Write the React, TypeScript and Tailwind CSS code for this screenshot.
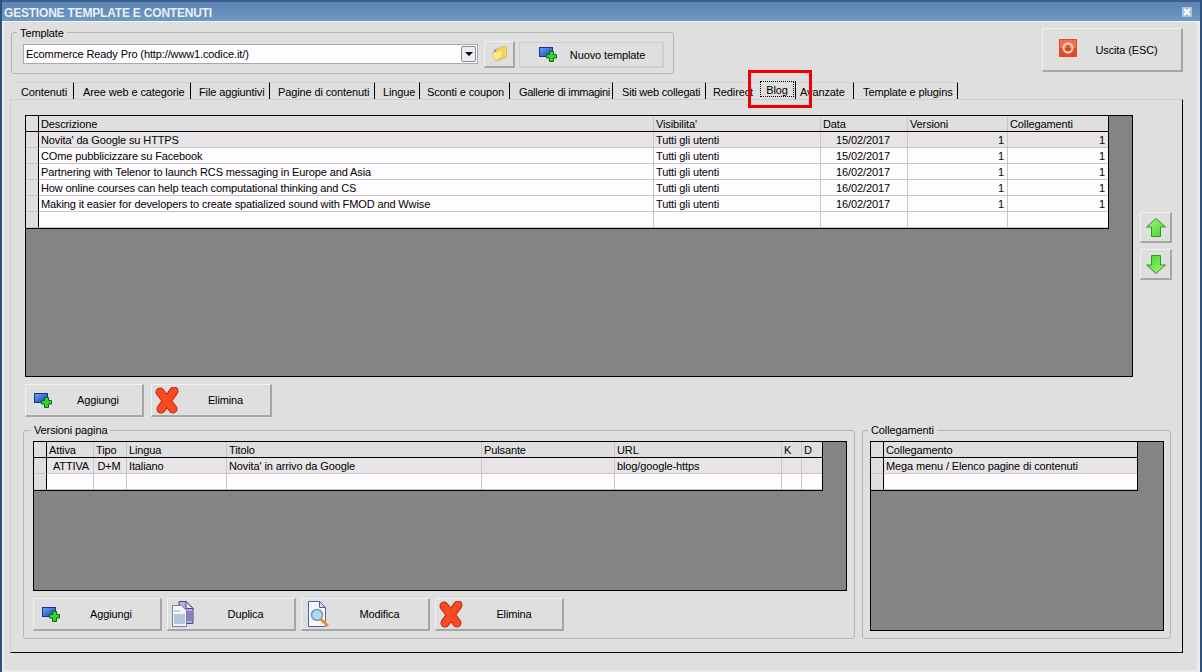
import type { ReactNode } from "react";

type Col = { label: string; w: string; cell?: string };

const tabs = [
  { label: "Contenuti", cls: "w-[60px] pl-[7px]" },
  { label: "Aree web e categorie", cls: "w-[117px] pl-[9px]" },
  { label: "File aggiuntivi", cls: "w-[79px] pl-[8px]" },
  { label: "Pagine di contenuti", cls: "w-[105px] pl-[8px]" },
  { label: "Lingue", cls: "w-[45px] pl-[8px]" },
  { label: "Sconti e coupon", cls: "w-[90px] pl-[7px]" },
  { label: "Gallerie di immagini", cls: "w-[103px] pl-[9px] tracking-[-0.28px]" },
  { label: "Siti web collegati", cls: "w-[93px] pl-[9px] tracking-[-0.2px]" },
  { label: "Redirect", cls: "w-[53px] pl-[7px] border-r-transparent" },
  { label: "Blog", cls: "active" },
  { label: "Avanzate", cls: "w-[58px] pl-[4px]" },
  { label: "Template e plugins", cls: "w-[104px] pl-[9px]" },
];

const blogCols: Col[] = [
  { label: "Descrizione", w: "w-[615px]" },
  { label: "Visibilita'", w: "w-[167px]" },
  { label: "Data", w: "w-[87px]", cell: "text-center pr-[4px]" },
  { label: "Versioni", w: "w-[100px]", cell: "text-right pr-[3px]" },
  { label: "Collegamenti", w: "w-[100px]", cell: "text-right pr-[3px]" },
];

const blogRows = [
  ["Novita' da Google su HTTPS", "Tutti gli utenti", "15/02/2017", "1", "1"],
  ["COme pubblicizzare su Facebook", "Tutti gli utenti", "15/02/2017", "1", "1"],
  ["Partnering with Telenor to launch RCS messaging in Europe and Asia", "Tutti gli utenti", "16/02/2017", "1", "1"],
  ["How online courses can help teach computational thinking and CS", "Tutti gli utenti", "16/02/2017", "1", "1"],
  ["Making it easier for developers to create spatialized sound with FMOD and Wwise", "Tutti gli utenti", "16/02/2017", "1", "1"],
  ["", "", "", "", ""],
];

const versionCols: Col[] = [
  { label: "Attiva", w: "w-[47px]", cell: "text-center" },
  { label: "Tipo", w: "w-[33px]", cell: "text-center pr-[4px]" },
  { label: "Lingua", w: "w-[100px]" },
  { label: "Titolo", w: "w-[255px]" },
  { label: "Pulsante", w: "w-[133px]" },
  { label: "URL", w: "w-[167px]" },
  { label: "K", w: "w-[20px]" },
  { label: "D", w: "w-[20px]" },
];

const versionRows = [
  ["ATTIVA", "D+M", "Italiano", "Novita' in arrivo da Google", "", "blog/google-https", "", ""],
  ["", "", "", "", "", "", "", ""],
];

const linkCols: Col[] = [{ label: "Collegamento", w: "w-[253px]" }];
const linkRows = [["Mega menu / Elenco pagine di contenuti"], [""]];

function DataGrid({ size, cols, rows }: { size: string; cols: Col[]; rows: string[][] }) {
  return (
    <div className={`${size} border border-black bg-[#858385] overflow-hidden`}>
      <div className="w-fit border-r border-b border-black">
        <div className="flex h-[16px] border-b border-black bg-[#dfdfdf]">
          <div className="w-[13px] border-r border-black" />
          {cols.map((c, i) => (
            <div key={c.label} className={`${c.w} pl-[2px] leading-[17px] ${i < cols.length - 1 ? "border-r border-[#c6c6c6]" : ""}`}>
              {c.label}
            </div>
          ))}
        </div>
        {rows.map((row, r) => (
          <div key={r} className={`flex h-[16px] ${r === 0 ? "bg-[#e8e4e8]" : "bg-[#fffcff]"}`}>
            <div className="w-[13px] bg-[#dfdfdf] border-r border-r-black border-b border-b-[#c6c6c6]" />
            {row.map((v, i) => (
              <div
                key={i}
                className={`${cols[i].w} pl-[2px] leading-[17px] h-[16px] whitespace-nowrap border-b border-[#c6c6c6] ${i < cols.length - 1 ? "border-r" : ""} ${cols[i].cell ?? ""}`}
              >
                {v}
              </div>
            ))}
          </div>
        ))}
      </div>
    </div>
  );
}

function Btn({ size, region, icon, label }: { size: string; region: string; icon: ReactNode; label?: string }) {
  return (
    <button className={`${size} flex items-center shrink-0 bg-[#dfdfdf] border-t border-l border-t-[#f0f0f0] border-l-[#f0f0f0] border-r-2 border-b-2 border-r-[#a6a6a6] border-b-[#a6a6a6]`}>
      <span className={`${region} flex items-center shrink-0`}>{icon}</span>
      {label && <span className="flex-1 text-center whitespace-nowrap pt-[1px]">{label}</span>}
    </button>
  );
}

function Group({ size, title, legend, pad, children }: { size: string; title: string; legend: string; pad: string; children: ReactNode }) {
  return (
    <fieldset className={`${size} border border-[#b5b5b5] rounded-[3px] min-w-0 shrink-0`}>
      <legend className={`${legend} px-[3px] leading-[14px]`}>{title}</legend>
      <div className={pad}>{children}</div>
    </fieldset>
  );
}

function AddIcon() {
  return (
    <svg width="18" height="15" viewBox="0 0 18 15" className="shrink-0 overflow-visible">
      <defs>
        <linearGradient id="addBlue" x1="0" y1="0" x2="1" y2="1">
          <stop offset="0" stopColor="#6fa4f0" />
          <stop offset="1" stopColor="#0f3fc0" />
        </linearGradient>
      </defs>
      <rect x="0.5" y="0.5" width="13" height="9" fill="url(#addBlue)" stroke="#12378f" />
      <path d="M10.500 4.500h4v3h3v3.500h-3v3.500h-4V11h-3V7.500h3z" fill="#3ccf30" stroke="#0b6a12" />
    </svg>
  );
}

function DeleteIcon() {
  return (
    <svg width="24" height="27" viewBox="0 0 24 27" className="shrink-0">
      <path d="M5 5 L18 22 M19 4 L6 22" stroke="#b92c10" strokeWidth="9" strokeLinecap="round" fill="none" />
      <path d="M5 5 L18 22 M19 4 L6 22" stroke="#fb4a22" strokeWidth="7" strokeLinecap="round" fill="none" />
    </svg>
  );
}

function DuplicateIcon() {
  return (
    <svg width="22" height="26" viewBox="0 0 22 26" className="shrink-0">
      <path d="M7 .5h7l7 7v15H7z" fill="#b9addb" stroke="#4f4088" />
      <path d="M14 .5v7h7z" fill="#e8e4f5" stroke="#4f4088" />
      <rect x="13" y="10" width="7" height="10" fill="#8b7dc0" />
      <path d="M.5 4.500h9l5 5v16H.500z" fill="#f0f3f8" stroke="#6c82a8" />
      <rect x="2" y="13" width="11" height="10" fill="#b6c5de" />
      <rect x="2" y="9" width="6" height="2" fill="#c9d4e6" />
    </svg>
  );
}

function ViewIcon() {
  return (
    <svg width="21" height="27" viewBox="0 0 21 27" className="shrink-0">
      <path d="M.5 .5h11l6 6v19H.500z" fill="#f6f8fd" stroke="#4d63a8" />
      <path d="M11.500 .5v6h6z" fill="#d5dff0" stroke="#4d63a8" />
      <circle cx="9" cy="14" r="5.500" fill="#a9dcf2" stroke="#7d98a8" strokeWidth="1.500" />
      <path d="M13 18.500 L19 24" stroke="#ec8a2c" strokeWidth="3" strokeLinecap="round" />
    </svg>
  );
}

function FolderIcon() {
  return (
    <svg width="15" height="16" viewBox="0 0 15 16" className="shrink-0">
      <path d="M4 3 L13 0 L14.500 1 V11 L5 15 Z" fill="#f6d75e" stroke="#c9a53c" strokeWidth=".6" />
      <path d="M.5 7 L9 4 L10.500 5 V11 L3 15 Z" fill="#fde88a" stroke="#d9b746" strokeWidth=".6" />
      <path d="M1 5 L4 3 V6 Z" fill="#8a7fd0" />
    </svg>
  );
}

function PowerIcon() {
  return (
    <svg width="18" height="19" viewBox="0 0 18 19" className="shrink-0">
      <rect x="0" y="0" width="18" height="19" fill="#e24a28" />
      <rect x="1" y="1" width="16" height="8" fill="#f2704a" />
      <rect x="0" y="18" width="18" height="1" fill="#f0d8d0" />
      <circle cx="9" cy="9" r="4.500" fill="none" stroke="#f9d8cc" strokeWidth="2" />
      <path d="M9 6.500v4" stroke="#c73c1c" strokeWidth="1.500" />
    </svg>
  );
}

function ArrowIcon({ down }: { down?: boolean }) {
  return (
    <svg width="20" height="19" viewBox="0 0 20 19" className={down ? "rotate-180" : ""}>
      <defs>
        <linearGradient id="arrowGreen" x1="0" y1="0" x2="1" y2="1">
          <stop offset="0" stopColor="#a8f77a" />
          <stop offset="1" stopColor="#3fd62a" />
        </linearGradient>
      </defs>
      <path d="M10 .5 L19.500 9 H14.500 V18.500 H5.500 V9 H.500 Z" fill="url(#arrowGreen)" stroke="#2c9a22" />
    </svg>
  );
}

export default function App() {
  return (
    <div className="w-[1202px] h-[672px] flex flex-col overflow-hidden border-x-2 border-[#2f4f7c] bg-[#dfdfdf] text-[11px] tracking-[-0.12px] text-black font-['Liberation_Sans',sans-serif] relative">
      {/* title bar */}
      <div className="h-[22px] shrink-0 flex items-center justify-between pl-[2px] pr-[8px] border-t-2 border-t-[#3d5f8d] border-b border-b-[#f0f4f8] bg-gradient-to-b from-[#5b84b4] to-[#7299c3]">
        <span className="text-[12px] tracking-[-0.2px] pt-[2px] font-bold text-[#e9eff6] whitespace-nowrap">GESTIONE TEMPLATE E CONTENUTI</span>
        <span className="w-[10px] h-[10px] bg-[#a9c2de] flex items-center justify-center">
          <svg width="8" height="8" viewBox="0 0 8 8"><path d="M1 1l6 6M7 1l-6 6" stroke="#fff" strokeWidth="2" /></svg>
        </span>
      </div>

      <div className="flex-1 flex flex-col shadow-[inset_2px_0_0_#ececec,inset_-3px_0_0_#ececec,inset_0_-2px_0_#ececec]">
        {/* template row */}
        <div className="flex justify-between items-start pl-[9px] pr-[17px] mt-[3px] shrink-0">
          <Group size="w-[663px] h-[49px]" title="Template" legend="ml-[5px] pt-[1px]" pad="pl-[11px] pt-[1px]">
            <div className="flex items-start">
              <div className="w-[455px] h-[20px] mt-[3px] bg-[#fffcff] border border-[#a9a9a9] flex items-center justify-between pl-[2px] pr-[1px]">
                <span className="pt-[1px]">Ecommerce Ready Pro (http://www1.codice.it/)</span>
                <span className="w-[15px] h-[16px] rounded-[2px] border border-[#8b8b8b] bg-[#ececf2] flex items-center justify-center">
                  <span className="w-0 h-0 border-x-[4px] border-x-transparent border-t-[4px] border-t-black" />
                </span>
              </div>
              <div className="ml-[6px]">
                <Btn size="w-[31px] h-[27px]" region="w-full justify-center" icon={<FolderIcon />} />
              </div>
              <div className="ml-[4px] mt-[1px]">
                <Btn size="w-[145px] h-[26px] !border-[#cfcfcf]" region="w-[33px] pl-[19px]" icon={<AddIcon />} label="Nuovo template" />
              </div>
            </div>
          </Group>
          <div className="mt-[3px]">
            <Btn size="w-[141px] h-[44px]" region="w-[29px] pl-[16px] -mt-[2px]" icon={<PowerIcon />} label="Uscita (ESC)" />
          </div>
        </div>

        {/* tabs */}
        <div className="flex items-end h-[19px] ml-[12px] mt-[6px] shrink-0">
          {tabs.map((t) =>
            t.cls === "active" ? (
              <div key={t.label} className="w-[37px] h-[19px] flex items-start pl-px pt-px">
                <div className="w-[34px] h-[16px] border border-dotted border-black text-center leading-[16px]">{t.label}</div>
                <div className="ml-[1px] w-px h-[18px] bg-black" />
              </div>
            ) : (
              <div key={t.label} className={`${t.cls} h-[17px] leading-[18px] whitespace-nowrap border-t border-[#d2d2d2] border-r border-r-black`}>
                {t.label}
              </div>
            )
          )}
        </div>

        {/* tab page */}
        <div className="ml-[8px] w-[1173px] h-[554px] shrink-0 border-l border-t border-[#cfcfcf] border-r border-r-black border-b border-b-black pt-[15px] pl-[14px]">
          <div className="flex">
            <DataGrid size="w-[1108px] h-[262px]" cols={blogCols} rows={blogRows} />
            <div className="ml-[7px] mt-[97px] flex flex-col gap-[6px]">
              <Btn size="w-[32px] h-[31px]" region="w-full justify-center" icon={<ArrowIcon />} />
              <Btn size="w-[32px] h-[31px]" region="w-full justify-center" icon={<ArrowIcon down />} />
            </div>
          </div>

          <div className="flex gap-[7px] mt-[7px]">
            <Btn size="w-[119px] h-[33px]" region="w-[28px] pl-[8px]" icon={<AddIcon />} label="Aggiungi" />
            <Btn size="w-[121px] h-[33px]" region="w-[29px] pl-[3px]" icon={<DeleteIcon />} label="Elimina" />
          </div>

          <div className="flex gap-[7px] mt-[6px] -ml-[2px]">
            <Group size="w-[832px] h-[216px]" title="Versioni pagina" legend="ml-[7px]" pad="pl-[9px] pt-[4px]">
              <DataGrid size="w-[814px] h-[150px]" cols={versionCols} rows={versionRows} />
              <div className="flex gap-[5px] mt-[7px]">
                <Btn size="w-[129px] h-[33px]" region="w-[28px] pl-[8px]" icon={<AddIcon />} label="Aggiungi" />
                <Btn size="w-[129px] h-[33px]" region="w-[29px] pl-[4px]" icon={<DuplicateIcon />} label="Duplica" />
                <Btn size="w-[129px] h-[33px]" region="w-[29px] pl-[6px]" icon={<ViewIcon />} label="Modifica" />
                <Btn size="w-[129px] h-[33px]" region="w-[30px] pl-[3px]" icon={<DeleteIcon />} label="Elimina" />
              </div>
            </Group>
            <Group size="w-[309px] h-[216px]" title="Collegamenti" legend="ml-[5px]" pad="pl-[7px] pt-[4px]">
              <DataGrid size="w-[294px] h-[190px]" cols={linkCols} rows={linkRows} />
            </Group>
          </div>
        </div>
      </div>

      {/* red highlight drawn over the Blog tab */}
      <div className="absolute left-[746px] top-[70px] w-[64px] h-[38px] border-[3px] border-[#f00000]" />
    </div>
  );
}
